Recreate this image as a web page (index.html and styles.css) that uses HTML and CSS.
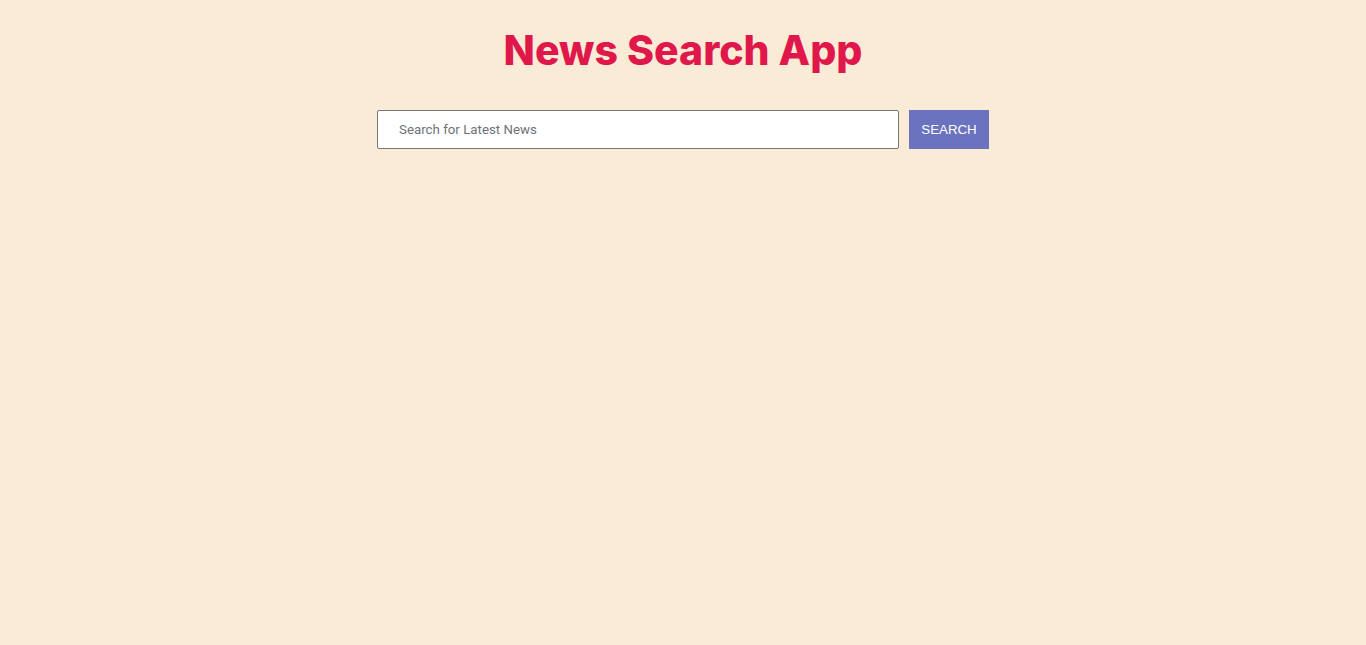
FILE: index.html
```html
<!DOCTYPE html>
<html>
<head>
<meta charset="utf-8">
<link rel="stylesheet" href="styles.css">
</head>
<body>
<div class="app">
  <h1 class="title">News Search App</h1>
  <form class="search">
    <input class="search-input" type="text" placeholder="Search for Latest News">
    <button class="search-btn" type="button">SEARCH</button>
  </form>
</div>
</body>
</html>
```
FILE: styles.css
```css
html, body { margin: 0; padding: 0; }
body {
  background: #faebd7;
  min-height: 645px;
  font-family: Roboto, "Liberation Sans", sans-serif;
}
.app {
  display: flex;
  flex-direction: column;
  align-items: center;
}
.title {
  margin: 26px 0 0;
  font-family: Inter, "Open Sans", sans-serif;
  font-weight: 800;
  font-size: 41px;
  line-height: 48px;
  letter-spacing: 0;
  color: #e0174a;
}
.search {
  display: flex;
  gap: 10px;
  margin-top: 36px;
}
.search-input {
  box-sizing: border-box;
  width: 522px;
  height: 39px;
  border: 1px solid #767676;
  border-radius: 2px;
  background: #fff;
  padding: 0 21px 1px;
  font-family: Roboto, sans-serif;
  font-size: 13.3px;
  color: #333;
  outline: none;
}
.search-input::placeholder { color: #6f7278; }
.search-btn {
  box-sizing: border-box;
  width: 80px;
  height: 39px;
  border: none;
  padding: 0;
  background: #6b72c0;
  color: #fff;
  font-family: "Liberation Sans", Arial, sans-serif;
  font-size: 13.3px;
  cursor: pointer;
}
```
